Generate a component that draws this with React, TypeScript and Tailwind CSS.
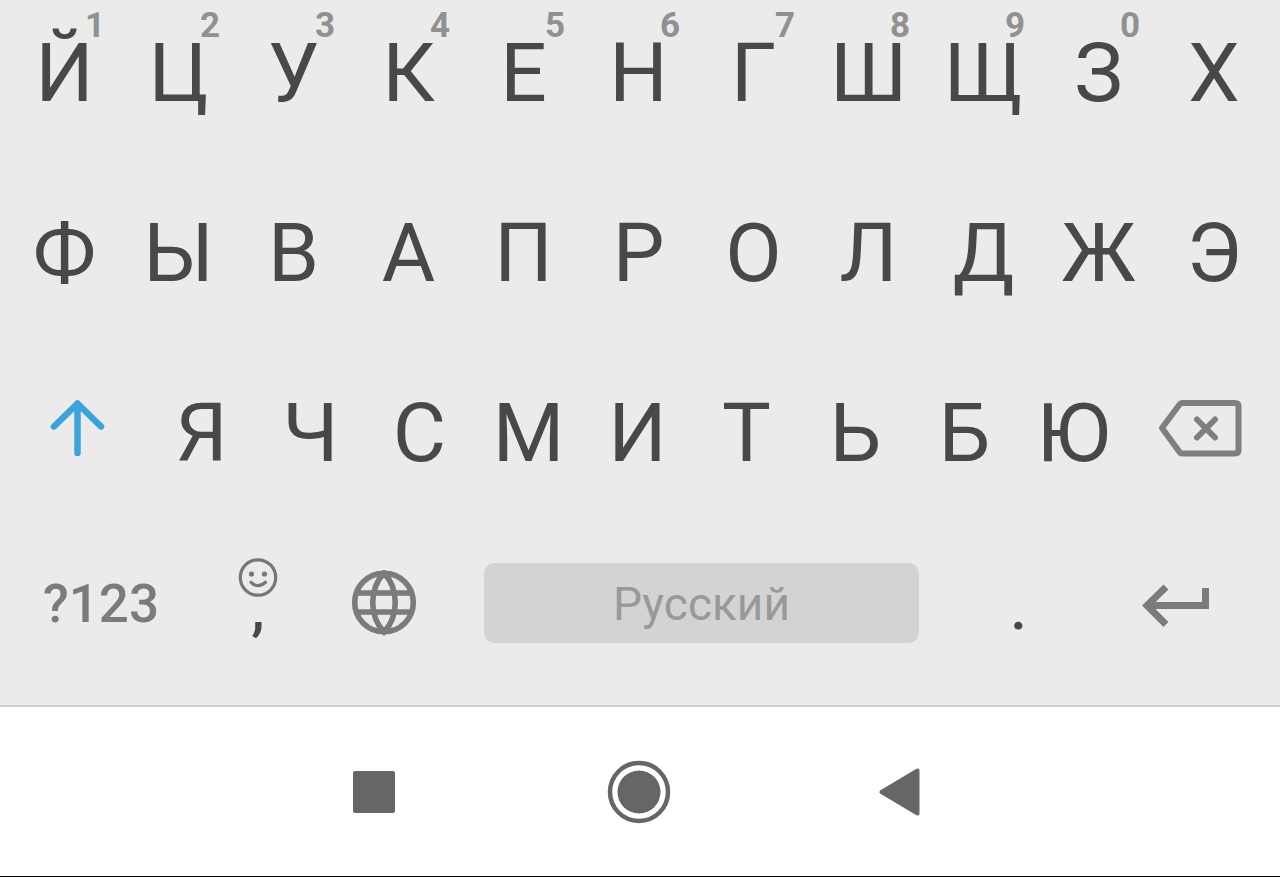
import type { ReactNode } from "react";

type LetterKey = { letter: string; hint?: string };

const topRow: LetterKey[] = [
  { letter: "Й", hint: "1" },
  { letter: "Ц", hint: "2" },
  { letter: "У", hint: "3" },
  { letter: "К", hint: "4" },
  { letter: "Е", hint: "5" },
  { letter: "Н", hint: "6" },
  { letter: "Г", hint: "7" },
  { letter: "Ш", hint: "8" },
  { letter: "Щ", hint: "9" },
  { letter: "З", hint: "0" },
  { letter: "Х" },
];
const middleRow: LetterKey[] = [..."ФЫВАПРОЛДЖЭ"].map((letter) => ({ letter }));
const bottomRow: LetterKey[] = [..."ЯЧСМИТЬБЮ"].map((letter) => ({ letter }));

function Key({ label, children }: { label?: string; children: ReactNode }) {
  return (
    <button
      type="button"
      aria-label={label}
      className="relative flex h-full min-w-0 items-center justify-center text-[82px] leading-none text-[#484848]"
    >
      {children}
    </button>
  );
}

function Letter({ letter, hint }: LetterKey) {
  return (
    <Key>
      {letter}
      {hint && (
        <span className="absolute top-[7px] right-4 text-[35px] leading-9 font-bold text-[#919191]">
          {hint}
        </span>
      )}
    </Key>
  );
}

function Mark({ children }: { children: string }) {
  return <span className="pt-3 text-[60px] font-medium">{children}</span>;
}

function ShiftIcon() {
  return (
    <svg width="56" height="68" viewBox="0 0 56 68" fill="none" stroke="#3ba3dc" strokeWidth="6.5" strokeLinecap="round" strokeLinejoin="round">
      <path d="M27.500 54V4.500M4 27.500L27.500 4.500L51 27.500" />
    </svg>
  );
}

function BackspaceIcon() {
  return (
    <svg width="84" height="68" viewBox="-1 0 84 68" fill="none" stroke="#7f7f7f" strokeWidth="6" strokeLinejoin="round">
      <path d="M23 4H76Q79.500 4 79.500 7.500V51Q79.500 54.500 76 54.500H23Q21.500 54.500 20.500 53L3 29L20.500 5.500Q21.500 4 23 4Z" />
      <path d="M38 20.500L56 38.500M56 20.500L38 38.500" strokeLinecap="round" />
    </svg>
  );
}

function SmileIcon() {
  return (
    <svg width="40" height="40" viewBox="0 0 40 40" fill="none" stroke="#777777" strokeWidth="3.2">
      <circle cx="20" cy="20.500" r="17.700" />
      <circle cx="13.500" cy="17" r="2.600" fill="#777777" stroke="none" />
      <circle cx="26.500" cy="17" r="2.600" fill="#777777" stroke="none" />
      <path d="M13 25.300Q20 32 27.500 25.300" strokeLinecap="round" />
    </svg>
  );
}

function GlobeIcon() {
  return (
    <svg width="66" height="66" viewBox="0 0 66 66" fill="none" stroke="#7b7b7b" strokeWidth="5.600">
      <circle cx="33" cy="32.500" r="29.300" />
      <path d="M33 3C18 19 18 46 33 62C48 46 48 19 33 3Z" />
      <path d="M6 23H60M6 42H60" />
    </svg>
  );
}

function EnterIcon() {
  return (
    <svg width="70" height="46" viewBox="0 -3 70 46" fill="none" stroke="#7b7b7b" strokeWidth="7" overflow="visible">
      <path d="M64.500 5V22.500H6" />
      <path d="M25 4L6 22.500L25 41.500" />
    </svg>
  );
}

function NavButton({ label, children }: { label: string; children: ReactNode }) {
  return (
    <button type="button" aria-label={label} className="flex items-center justify-center">
      <svg width="68" height="68" viewBox="0 0 68 68" fill="#666666">
        {children}
      </svg>
    </button>
  );
}

export default function App() {
  return (
    <div className="flex min-h-screen flex-col border-b border-black bg-white font-['Roboto',sans-serif]">
      <main className="flex flex-col gap-9 bg-[#ebebeb] px-2 pt-px pb-10">
        <div className="grid h-36 grid-cols-[113fr_repeat(9,115fr)_116fr]">
          {topRow.map((key) => (
            <Letter key={key.letter} {...key} />
          ))}
        </div>
        <div className="grid h-36 grid-cols-[113fr_repeat(9,115fr)_116fr]">
          {middleRow.map((key) => (
            <Letter key={key.letter} {...key} />
          ))}
        </div>
        <div className="grid h-36 grid-cols-[139fr_repeat(9,109fr)_144fr]">
          <Key label="Shift">
            <ShiftIcon />
          </Key>
          {bottomRow.map((key) => (
            <Letter key={key.letter} {...key} />
          ))}
          <Key label="Backspace">
            <BackspaceIcon />
          </Key>
        </div>
        <div className="grid h-[124px] grid-cols-[186fr_128fr_124fr_511fr_123fr_192fr]">
          <Key>
            <span className="pt-0.5 text-[53px] font-medium text-[#7b7b7b]">?123</span>
          </Key>
          <Key>
            <Mark>,</Mark>
            <span className="absolute inset-x-0 top-4 flex justify-center">
              <SmileIcon />
            </span>
          </Key>
          <Key label="Language">
            <GlobeIcon />
          </Key>
          <div className="flex items-center px-[38px]">
            <button
              type="button"
              className="h-20 w-full rounded-[10px] bg-[#d3d3d3] pt-0.5 text-[46px] leading-none text-[#999999]"
            >
              Русский
            </button>
          </div>
          <Key>
            <Mark>.</Mark>
          </Key>
          <Key label="Enter">
            <EnterIcon />
          </Key>
        </div>
      </main>
      <nav className="grid min-h-40 flex-1 grid-cols-3 border-t-2 border-[#cfcfcf] px-[19%]">
        <NavButton label="Recent apps">
          <rect x="12" y="13" width="42" height="42" rx="2" />
        </NavButton>
        <NavButton label="Home">
          <circle cx="33" cy="34" r="29" fill="none" stroke="#666666" strokeWidth="4.500" />
          <circle cx="33" cy="34" r="21.500" />
        </NavButton>
        <NavButton label="Back">
          <path d="M10.500 34L46.500 12.500V55.500Z" stroke="#666666" strokeWidth="4" strokeLinejoin="round" />
        </NavButton>
      </nav>
    </div>
  );
}
